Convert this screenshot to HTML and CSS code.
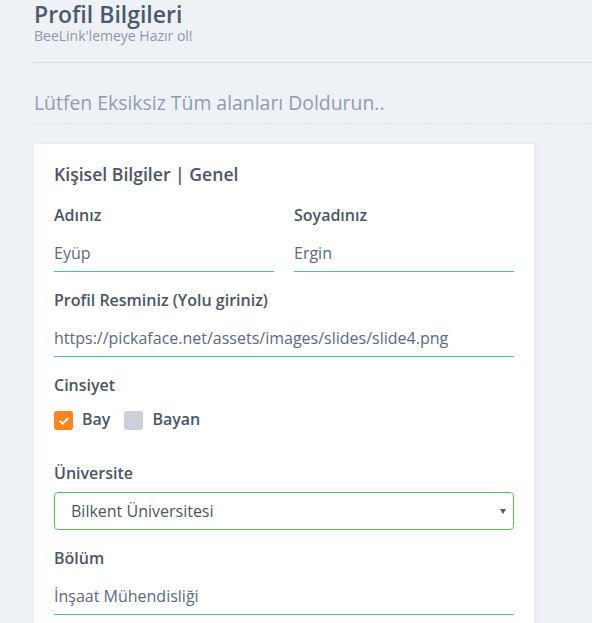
FILE: index.html
```html
<!DOCTYPE html>
<html lang="tr">
<head>
<meta charset="utf-8">
<link rel="stylesheet" href="styles.css">
</head>
<body>
<div class="page">
  <header class="page-head">
    <h1 class="page-title">Profil Bilgileri</h1>
    <div class="page-sub">BeeLink'lemeye Hazır ol!</div>
  </header>
  <div class="lead">Lütfen Eksiksiz Tüm alanları Doldurun..</div>
  <div class="card">
    <h2 class="card-title">Kişisel Bilgiler | Genel</h2>
    <div class="row">
      <div class="field">
        <label class="label">Adınız</label>
        <div class="input">Eyüp</div>
      </div>
      <div class="field">
        <label class="label">Soyadınız</label>
        <div class="input">Ergin</div>
      </div>
    </div>
    <div class="field">
      <label class="label">Profil Resminiz (Yolu giriniz)</label>
      <div class="input">https://pickaface.net/assets/images/slides/slide4.png</div>
    </div>
    <div class="field gender">
      <label class="label">Cinsiyet</label>
      <div class="checks">
        <span class="check">
          <span class="box on"><svg width="12" height="12" viewBox="0 0 12 12"><path d="M2.2 6.3 L4.8 8.7 L9.8 3.5" fill="none" stroke="#fff" stroke-width="1.9" stroke-linecap="round" stroke-linejoin="round"/></svg></span>
          <span class="check-text">Bay</span>
        </span>
        <span class="check">
          <span class="box"></span>
          <span class="check-text">Bayan</span>
        </span>
      </div>
    </div>
    <div class="field">
      <label class="label">Üniversite</label>
      <div class="select">
        <span>Bilkent Üniversitesi</span>
        <span class="caret"></span>
      </div>
    </div>
    <div class="field">
      <label class="label">Bölüm</label>
      <div class="input">İnşaat Mühendisliği</div>
    </div>
  </div>
</div>
</body>
</html>
```
FILE: styles.css
```css
html, body {
  margin: 0;
  padding: 0;
  background: #eef1f5;
  font-family: "Open Sans", "Noto Sans", sans-serif;
  color: #4d5a6b;
}
.page {
  padding-left: 34px;
  height: 623px;
  overflow: hidden;
}
.page-head {
  padding-bottom: 18px;
  border-bottom: 1px solid #d6dbe3;
}
.page-title {
  margin: 0;
  font-size: 23px;
  font-weight: 600;
  line-height: 28px;
  color: #4b5a6e;
}
.page-sub {
  font-size: 14px;
  line-height: 16px;
  color: #8d99ab;
}
.lead {
  margin-top: 25px;
  font-size: 19.4px;
  font-weight: 400;
  color: #919dae;
  line-height: 30px;
  padding-bottom: 5px;
  border-bottom: 1px dashed #dce1e8;
}
.card {
  margin-top: 20px;
  width: 500px;
  background: #fff;
  box-sizing: border-box;
  padding: 18px 20px 20px;
  box-shadow: 2px 0 4px rgba(180, 190, 205, 0.15);
}
.card-title {
  margin: 0 0 18px;
  font-size: 17.6px;
  font-weight: 600;
  line-height: 24px;
  color: #4b5668;
}
.row {
  display: grid;
  grid-template-columns: 1fr 1fr;
  gap: 20px;
}
.field {
  margin-bottom: 17px;
}
.label {
  display: block;
  font-size: 16px;
  font-weight: 600;
  line-height: 22px;
  color: #4b5668;
  margin-bottom: 8px;
}
.input {
  font-size: 16px;
  line-height: 22px;
  color: #5b6a7f;
  padding: 8px 0 7px;
  border-bottom: 1px solid #3fc98f;
}
.gender {
  margin-bottom: 32px;
}
.checks {
  display: flex;
  gap: 14px;
  padding-top: 4px;
}
.check {
  display: flex;
  align-items: center;
  gap: 9px;
}
.box {
  width: 19px;
  height: 19px;
  margin-top: 3px;
  border-radius: 3px;
  background: #cbd1db;
  display: flex;
  align-items: center;
  justify-content: center;
}
.box.on {
  background: #f58620;
}
.check-text {
  font-size: 16px;
  font-weight: 600;
  color: #4b5668;
  line-height: 22px;
}
.select {
  display: flex;
  align-items: center;
  justify-content: space-between;
  height: 38px;
  box-sizing: border-box;
  border: 1px solid #5cbd5c;
  border-radius: 4px;
  padding: 0 7px 0 16px;
  font-size: 16px;
  line-height: 22px;
  color: #4d5561;
}
.caret {
  width: 0;
  height: 0;
  margin-top: 1px;
  border-left: 3px solid transparent;
  border-right: 3px solid transparent;
  border-top: 5px solid #555;
}
```
